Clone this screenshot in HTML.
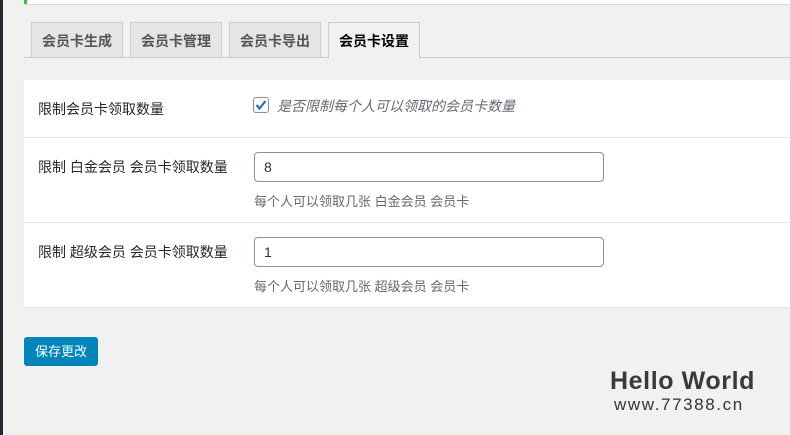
<!DOCTYPE html>
<html><head><meta charset="utf-8"><style>
*{box-sizing:border-box;margin:0;padding:0}
body{width:790px;height:435px;background:#f1f1f1;font-family:"Liberation Sans","Noto Sans CJK SC",sans-serif;font-size:14px;color:#23282d;position:relative;overflow:hidden}
.lb{position:absolute;left:0;top:0;width:3px;height:435px;background:#23282d}
.notice{position:absolute;left:24px;top:0;width:766px;height:4px;background:#fff;border-left:3px solid #46b450;box-shadow:0 1px 1px rgba(0,0,0,.1)}
.tabs{position:absolute;left:24px;top:57px;width:766px;border-top:1px solid #ccc}
.tab{position:absolute;top:22px;height:36px;width:92px;background:#e5e5e5;border:1px solid #ccc;border-bottom:none;font-size:14px;font-weight:bold;color:#555;text-align:center;line-height:37px}
.tab.act{background:#f1f1f1;color:#000;height:37px}
.card{position:absolute;left:24px;top:80px;width:770px;height:227px;background:#fff;box-shadow:0 1px 1px rgba(0,0,0,.06)}
.row{position:absolute;left:0;width:770px;border-top:1px solid #e6e6e6}
.lab{position:absolute;left:14px;font-size:14px;color:#23282d}
.inp{position:absolute;left:230px;width:350px;height:30px;border:1px solid #8c8f94;border-radius:4px;padding-left:9px;line-height:28px;font-size:14px;color:#2c3338}
.desc{position:absolute;left:230px;font-size:13px;color:#646970}
.cb{position:absolute;left:229px;top:17px;width:16px;height:16px;border:1px solid #8c8f94;border-radius:3px;background:#fff}
.btn{position:absolute;left:24px;top:337px;width:74px;height:29px;background:#0085ba;border-radius:3px;color:#fff;font-size:13px;text-align:center;line-height:29px}
.hw{position:absolute;left:610px;top:367px;font-family:"Liberation Sans",sans-serif;font-weight:bold;font-size:25px;color:#3a3a3a;letter-spacing:0.6px}
.url{position:absolute;left:614px;top:395px;font-size:17px;color:#333;letter-spacing:1.6px}
</style></head><body>
<div class="lb"></div>
<div class="notice"></div>
<div class="tab" style="left:31px">会员卡生成</div>
<div class="tab" style="left:130px">会员卡管理</div>
<div class="tab" style="left:229px">会员卡导出</div>
<div class="tabs"></div>
<div class="tab act" style="left:328px">会员卡设置</div>
<div class="card">
 <div class="lab" style="top:19px">限制会员卡领取数量</div>
 <div class="cb"><svg width="14" height="14" viewBox="0 0 14 14" style="position:absolute;left:0;top:0"><path d="M2.5 7 L5.5 10.5 L11.5 3" stroke="#2271b1" stroke-width="2.2" fill="none"/></svg></div>
 <div style="position:absolute;left:253px;top:16px;font-style:italic;color:#646970;font-size:14px">是否限制每个人可以领取的会员卡数量</div>
 <div class="row" style="top:57px;height:85px">
  <div class="lab" style="top:19px">限制 白金会员 会员卡领取数量</div>
  <div class="inp" style="top:14px">8</div>
  <div class="desc" style="top:53px">每个人可以领取几张 白金会员 会员卡</div>
 </div>
 <div class="row" style="top:142px;height:85px">
  <div class="lab" style="top:19px">限制 超级会员 会员卡领取数量</div>
  <div class="inp" style="top:14px">1</div>
  <div class="desc" style="top:53px">每个人可以领取几张 超级会员 会员卡</div>
 </div>
</div>
<div class="btn">保存更改</div>
<div class="hw">Hello World</div>
<div class="url">www.77388.cn</div>
</body></html>
